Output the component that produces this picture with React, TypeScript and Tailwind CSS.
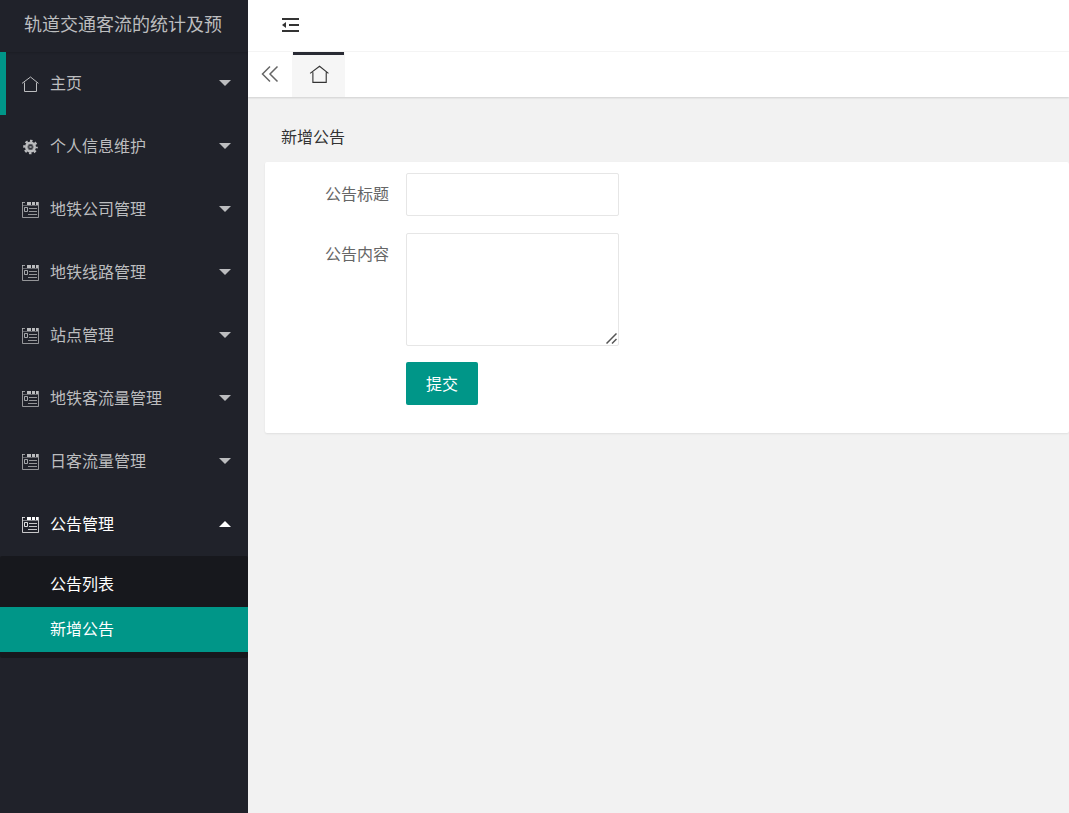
import React, { useState } from "react";

type IconName = "home" | "gear" | "form";

interface MenuItem {
  title: string;
  icon: IconName;
  children?: string[];
}

const menu: MenuItem[] = [
  { title: "主页", icon: "home" },
  { title: "个人信息维护", icon: "gear" },
  { title: "地铁公司管理", icon: "form" },
  { title: "地铁线路管理", icon: "form" },
  { title: "站点管理", icon: "form" },
  { title: "地铁客流量管理", icon: "form" },
  { title: "日客流量管理", icon: "form" },
  { title: "公告管理", icon: "form", children: ["公告列表", "新增公告"] },
];

const HomeIcon = ({ className }: { className?: string }) => (
  <svg className={className} viewBox="0 0 18 18" fill="none" stroke="currentColor">
    <path d="M1 8.4 9.5 2l8 6.4M3.5 7.5v9h12v-9" />
  </svg>
);

const GearIcon = () => (
  <svg className="size-[18px]" viewBox="0 0 18 18" fill="none" stroke="currentColor">
    <circle cx="9.5" cy="9" r="6.2" strokeWidth="2.2" strokeDasharray="2.5 2.37" strokeDashoffset="1.25" />
    <circle cx="9.5" cy="9" r="4.2" strokeWidth="2.6" />
    <circle cx="9.5" cy="9" r="2.5" strokeWidth="1" strokeOpacity="0.4" />
    <circle cx="9.5" cy="9" r="1.3" fill="currentColor" stroke="none" fillOpacity="0.7" />
  </svg>
);

const FormIcon = () => (
  <svg className="size-[18px]" viewBox="0 0 18 18" fill="none" stroke="currentColor">
    <path d="M1.5 1v15.5h16V1" strokeOpacity="0.75" />
    <path d="M1 1.5h3" strokeOpacity="0.75" />
    <path d="M6 2.5h4M11 2.5h3M15 2.5h2" strokeWidth="3" />
    <path d="M2 4.5h15" strokeOpacity="0.45" />
    <path d="M3.5 6.5h3v4h-3z" strokeOpacity="0.85" />
    <path d="M8 7.5h8M8 10.5h8M7 13.5h9" strokeOpacity="0.75" />
  </svg>
);

const MenuIcon = ({ name }: { name: IconName }) => {
  if (name === "home") return <HomeIcon className="size-[18px]" />;
  if (name === "gear") return <GearIcon />;
  return <FormIcon />;
};

const Sidebar: React.FC = () => {
  const [opened, setOpened] = useState("公告管理");

  return (
    <aside className="w-[248px] shrink-0 bg-[#20222a] text-[#bcbdbf]">
      <div className="h-[52px] overflow-hidden px-6 text-lg leading-[46px] whitespace-nowrap shadow-[0_1px_2px_rgba(0,0,0,0.15)]">
        轨道交通客流的统计及预
      </div>
      <nav>
        {menu.map((item, index) => {
          const isOpen = opened === item.title;
          return (
            <div key={item.title} className={isOpen ? "text-white" : ""}>
              <button
                type="button"
                aria-expanded={isOpen}
                onClick={() => setOpened(isOpen ? "" : item.title)}
                className={`flex h-[63px] w-full items-center border-l-[6px] pr-[17px] pl-[15px] text-left text-base ${
                  index === 0 ? "border-[#009688]" : "border-transparent"
                }`}
              >
                <MenuIcon name={item.icon} />
                <span className="ml-[11px] flex-1 pb-[3px]">{item.title}</span>
                <svg
                  className={`mb-[2px] h-[6px] w-3 ${isOpen ? "rotate-180" : ""}`}
                  viewBox="0 0 12 6"
                  fill="currentColor"
                >
                  <path d="M0 0h12L6 6z" />
                </svg>
              </button>
              {isOpen && item.children && (
                <div className="rounded-xs bg-[#17181d] py-[6px]">
                  {item.children.map((child) => (
                    <a
                      key={child}
                      href="#"
                      className={`block h-[45px] pl-[50px] leading-[43px] text-white ${
                        child === "新增公告" ? "bg-[#009688]" : ""
                      }`}
                    >
                      {child}
                    </a>
                  ))}
                </div>
              )}
            </div>
          );
        })}
      </nav>
    </aside>
  );
};

const App: React.FC = () => {
  return (
    <div className="flex min-h-screen bg-[#f2f2f2] font-['Noto_Sans_CJK_SC',sans-serif] text-base text-[#333]">
      <Sidebar />

      <div className="min-w-0 flex-1">
        <header className="flex h-[52px] items-center border-b border-[#f6f6f6] bg-white px-8 pb-[2px]">
          <button type="button" aria-label="侧边伸缩">
            <svg className="size-5" viewBox="0 0 20 20" fill="none" stroke="#333" strokeWidth="2">
              <path d="M2 4h17M9 10h10M2 16h17" />
              <path d="M2 10 6 7v6z" fill="#333" stroke="none" />
            </svg>
          </button>
        </header>

        <div className="flex h-[45px] bg-white shadow-[0_1px_2px_rgba(0,0,0,0.15)]">
          <button
            type="button"
            aria-label="向左"
            className="flex w-[45px] items-center justify-center border-r border-[#f6f6f6] pb-[2px]"
          >
            <svg className="size-[18px]" viewBox="0 0 18 18" fill="none" stroke="#666" strokeWidth="1.5">
              <path d="M9 1.5 1.5 9 9 16.5M16.5 1.5 9 9l7.5 7.5" />
            </svg>
          </button>
          <button
            type="button"
            aria-label="主页"
            className="flex w-[52px] flex-col items-center border-r border-[#f6f6f6] bg-[#f6f6f6]"
          >
            <span className="h-[3px] w-full bg-[#292b34]" />
            <span className="flex flex-1 items-center pb-1">
              <HomeIcon className="size-5" />
            </span>
          </button>
        </div>

        <main className="pt-4 pl-[17px]">
          <h1 className="h-[49px] px-4 leading-[47px]">新增公告</h1>
          <form
            className="flex flex-col gap-4 rounded-xs bg-white pt-[11px] pb-7 text-[#666] shadow-[0_1px_2px_rgba(0,0,0,0.08)]"
            onSubmit={(e) => e.preventDefault()}
          >
            <div className="flex h-11 items-start">
              <label htmlFor="title" className="w-[141px] pt-2 pr-[17px] text-right">
                公告标题
              </label>
              <input
                id="title"
                type="text"
                className="h-[43px] w-[213px] rounded-xs border border-[#e6e6e6] px-3 outline-none"
              />
            </div>
            <div className="flex items-start">
              <label htmlFor="content" className="w-[141px] pt-2 pr-[17px] text-right">
                公告内容
              </label>
              <div className="relative">
                <textarea
                  id="content"
                  className="block h-[113px] w-[213px] resize rounded-xs border border-[#e6e6e6] px-3 py-2 outline-none [&::-webkit-resizer]:bg-transparent"
                />
                <svg
                  className="pointer-events-none absolute right-[2px] bottom-[2px] size-[11px]"
                  viewBox="0 0 11 11"
                  fill="none"
                  stroke="#555"
                  strokeWidth="1.5"
                >
                  <path d="M.5 10.5l10-10M6 10.5l4.5-4.5" />
                </svg>
              </div>
            </div>
            <div className="flex pl-[141px]">
              <button type="submit" className="h-[43px] rounded-xs bg-[#009688] px-5 pb-[2px] text-white">
                提交
              </button>
            </div>
          </form>
        </main>
      </div>
    </div>
  );
};

export default App;
